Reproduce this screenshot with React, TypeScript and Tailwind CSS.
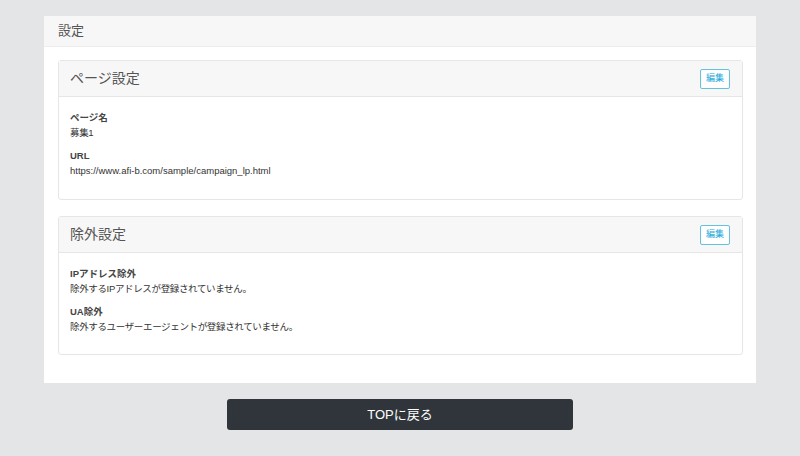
export default function App() {
  const font = { fontFamily: '"Liberation Sans", "Noto Sans CJK JP", sans-serif' }
  return (
    <div className="min-h-[456px] w-full bg-[#e4e5e6] pt-4 pb-6" style={font}>
      <div className="mx-[44px] bg-white">
        <div className="flex h-[31px] items-center border-b border-[#ececec] bg-[#f7f7f7] px-[14px] text-[13px] text-[#555]">
          設定
        </div>
        <div className="flex flex-col gap-[16px] px-[14px] pt-[13px] pb-[28px] pr-[13px]">
          <Section
            title="ページ設定"
            items={[
              { label: 'ページ名', value: '募集1', jp: true },
              { label: 'URL', value: 'https://www.afi-b.com/sample/campaign_lp.html', jp: false },
            ]}
            height="h-[140px]"
          />
          <Section
            title="除外設定"
            items={[
              { label: 'IPアドレス除外', value: '除外するIPアドレスが登録されていません。', jp: true },
              { label: 'UA除外', value: '除外するユーザーエージェントが登録されていません。', jp: true },
            ]}
            height="h-[139px]"
          />
        </div>
      </div>
      <div className="mt-[16px] flex justify-center">
        <button className="h-[31px] w-[346px] rounded-[3px] bg-[#2f353a] text-[13px] text-white">
          TOPに戻る
        </button>
      </div>
    </div>
  )
}

function Section({
  title,
  items,
  height,
}: {
  title: string
  items: { label: string; value: string; jp: boolean }[]
  height: string
}) {
  return (
    <div className={`${height} rounded-[3px] border border-[#e6e6e6] bg-white`}>
      <div className="flex h-[36px] items-center justify-between border-b border-[#e6e6e6] bg-[#f7f7f7] pl-[11px] pr-[12px]">
        <span className="text-[14px] text-[#555]">{title}</span>
        <button className="flex h-[20px] w-[30px] items-center justify-center rounded-[2px] border border-[#63c2de] bg-white text-[9px] text-[#20a8d8]">
          編集
        </button>
      </div>
      <div className="flex flex-col gap-[8px] px-[11px] pt-[13px]">
        {items.map(it => (
          <div key={it.label} className="text-[9.5px] leading-[15px] text-[#333]">
            <div className="font-bold text-[#444]">{it.label}</div>
            <div className={it.jp ? 'tracking-[-0.35px]' : ''}>{it.value}</div>
          </div>
        ))}
      </div>
    </div>
  )
}
